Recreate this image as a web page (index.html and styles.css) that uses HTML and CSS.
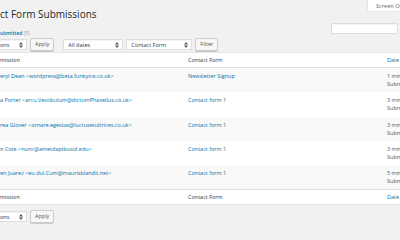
FILE: index.html
```html
<!DOCTYPE html>
<html lang="en">
<head>
  <meta charset="UTF-8">
  <title>Contact Form Submissions</title>
  <link rel="stylesheet" href="styles.css">
</head>
<body>
  <div class="wrap">
    <div class="page-head">
      <h1>ct Form Submissions</h1>
      <span class="screen-tab">Screen Options</span>
    </div>

    <div class="sub-row">
      <div class="subsubsub"><a href="#" class="current">ubmitted</a> <span class="count">(5)</span></div>
      <input type="search" class="search-input">
    </div>

    <div class="tablenav">
      <span class="select bulk">ons<svg class="arrows" width="4" height="6" viewBox="0 0 4 6"><path d="M0 2.4L2 0 4 2.4zM0 3.6L2 6 4 3.6z"/></svg></span>
      <span class="button">Apply</span>
      <span class="select dates">All dates<svg class="arrows" width="4" height="6" viewBox="0 0 4 6"><path d="M0 2.4L2 0 4 2.4zM0 3.6L2 6 4 3.6z"/></svg></span>
      <span class="select forms">Contact Form<svg class="arrows" width="4" height="6" viewBox="0 0 4 6"><path d="M0 2.4L2 0 4 2.4zM0 3.6L2 6 4 3.6z"/></svg></span>
      <span class="button">Filter</span>
    </div>

    <table class="list">
      <colgroup>
        <col class="col-sub">
        <col class="col-form">
        <col class="col-date">
      </colgroup>
      <thead>
        <tr>
          <th>mission</th>
          <th>Contact Form</th>
          <th><a href="#">Date</a></th>
        </tr>
      </thead>
      <tbody>
        <tr>
          <td><a href="#">eryl Dean &lt;wordpress@beta.funkyice.co.uk&gt;</a></td>
          <td><a href="#">Newsletter Signup</a></td>
          <td>1 min<br>Subm</td>
        </tr>
        <tr>
          <td><a href="#">a Porter &lt;arcu.Vestibulum@dictumPhasellus.co.uk&gt;</a></td>
          <td><a href="#">Contact form 1</a></td>
          <td>3 min<br>Subm</td>
        </tr>
        <tr>
          <td><a href="#">rea Glover &lt;ornare.egestas@luctusetultrices.co.uk&gt;</a></td>
          <td><a href="#">Contact form 1</a></td>
          <td>3 min<br>Subm</td>
        </tr>
        <tr>
          <td><a href="#">n Cote &lt;nunc@ametdapibusid.edu&gt;</a></td>
          <td><a href="#">Contact form 1</a></td>
          <td>3 min<br>Subm</td>
        </tr>
        <tr>
          <td><a href="#">en Juarez &lt;eu.dui.Cum@maurisblandit.net&gt;</a></td>
          <td><a href="#">Contact form 1</a></td>
          <td>5 min<br>Subm</td>
        </tr>
      </tbody>
      <tfoot>
        <tr>
          <th>mission</th>
          <th>Contact Form</th>
          <th><a href="#">Date</a></th>
        </tr>
      </tfoot>
    </table>

    <div class="tablenav bottom">
      <span class="select bulk">ons<svg class="arrows" width="4" height="6" viewBox="0 0 4 6"><path d="M0 2.4L2 0 4 2.4zM0 3.6L2 6 4 3.6z"/></svg></span>
      <span class="button">Apply</span>
    </div>
  </div>
</body>
</html>
```

FILE: styles.css
```css
html, body {
  margin: 0;
  padding: 0;
  background: #f1f1f1;
  overflow: hidden;
}
body {
  width: 400px;
  height: 240px;
  font-family: "Open Sans", sans-serif;
  font-size: 5.5px;
  color: #444;
}
a {
  color: #0073aa;
  text-decoration: none;
}
.page-head {
  display: flex;
  justify-content: space-between;
  align-items: flex-start;
  height: 21px;
}
.page-head h1 {
  margin: 7px 0 0;
  font-size: 10px;
  line-height: 14px;
  font-weight: 400;
  color: #23282d;
}
.screen-tab {
  box-sizing: border-box;
  width: 50px;
  height: 12px;
  margin-right: -17px;
  padding: 0 0 0 8px;
  line-height: 12px;
  font-size: 5.6px;
  color: #666;
  background: #fff;
  border: 1px solid #e5e5e5;
  border-top: none;
  white-space: nowrap;
  overflow: hidden;
}
.sub-row {
  display: flex;
  justify-content: space-between;
  align-items: flex-start;
  margin-top: 2px;
  height: 11px;
}
.subsubsub {
  margin-top: 6px;
  line-height: 8px;
  font-size: 5px;
  color: #666;
}
.subsubsub .current {
  font-weight: 600;
  color: #0073aa;
}
.subsubsub .count {
  color: #999;
}
.search-input {
  box-sizing: border-box;
  width: 67px;
  height: 11px;
  margin: 0 2px 0 0;
  padding: 0;
  border: 1px solid #ddd;
  background: #fff;
  box-shadow: inset 0 1px 1px rgba(0, 0, 0, 0.05);
}
.tablenav {
  display: flex;
  align-items: center;
  height: 13px;
  margin-top: 4px;
}
.select {
  box-sizing: border-box;
  display: flex;
  align-items: center;
  justify-content: space-between;
  height: 11px;
  padding: 0 3px 0 4px;
  background: #fff;
  border: 1px solid #ddd;
  box-shadow: inset 0 1px 1px rgba(0, 0, 0, 0.05);
  color: #32373c;
  font-size: 5.5px;
  white-space: nowrap;
}
.select .arrows {
  fill: #555;
}
.select.bulk {
  width: 27px;
  padding-left: 0;
  border-left: none;
}
.select.dates {
  width: 60px;
  margin-left: 9px;
}
.select.forms {
  width: 66px;
  margin-left: 3px;
}
.button {
  box-sizing: border-box;
  height: 13px;
  padding: 0 4px;
  margin-left: 3px;
  line-height: 11px;
  font-size: 5.5px;
  color: #555;
  background: #f7f7f7;
  border: 1px solid #ccc;
  border-radius: 2px;
  box-shadow: 0 1px 0 #ccc;
}
.list {
  width: 400px;
  margin-top: 1px;
  border-collapse: collapse;
  table-layout: fixed;
  background: #fff;
  border-top: 1px solid #e5e5e5;
  border-bottom: 1px solid #e5e5e5;
}
.col-sub {
  width: 188px;
}
.col-form {
  width: 199px;
}
.col-date {
  width: 13px;
}
.list th,
.list td {
  padding: 0;
  text-align: left;
  vertical-align: top;
  white-space: nowrap;
  overflow: hidden;
  line-height: 8px;
}
.list th {
  height: 11px;
  padding-top: 3px;
  font-weight: 400;
  color: #32373c;
}
.list thead th {
  border-bottom: 1px solid #e1e1e1;
}
.list tfoot th {
  border-top: 1px solid #e1e1e1;
}
.list td {
  padding: 4px 0 4.3px;
  color: #555;
}
.list tbody tr:nth-child(odd) {
  background: #f9f9f9;
}
.tablenav.bottom {
  margin-top: 5px;
}
```
